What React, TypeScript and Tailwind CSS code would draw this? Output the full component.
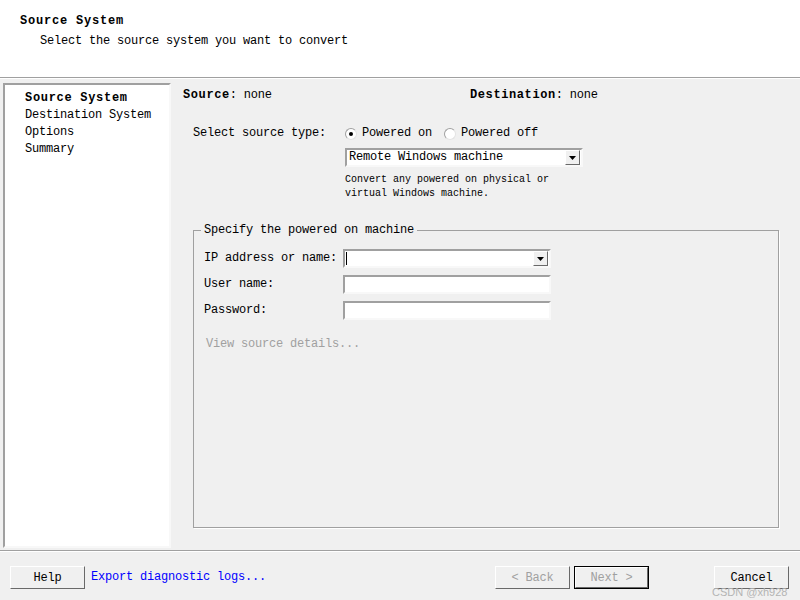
import React from "react"

const mono = { fontFamily: '"Liberation Mono", "DejaVu Sans Mono", monospace' }

function Radio({ checked }: { checked?: boolean }) {
	return (
		<span className="w-[12px] h-[12px] rounded-full bg-white border border-t-[#a0a0a0] border-l-[#a0a0a0] border-r-[#e3e3e3] border-b-[#e3e3e3] flex items-center justify-center shrink-0">
			{checked && <span className="w-[4px] h-[4px] rounded-full bg-black" />}
		</span>
	)
}

function ArrowBtn() {
	return (
		<span className="w-[15px] h-[15px] bg-[#f0f0f0] border border-t-white border-l-white border-r-[#696969] border-b-[#696969] flex items-center justify-center shrink-0">
			<svg width="7" height="4" viewBox="0 0 7 4">
				<path d="M0 0h7L3.5 4z" fill="#000" />
			</svg>
		</span>
	)
}

function Button({ label, disabled, isDefault }: { label: string; disabled?: boolean; isDefault?: boolean }) {
	return (
		<div className={`w-[75px] h-[23px] ${isDefault ? "border border-black" : ""}`}>
			<div className="w-full h-full bg-[#f0f0f0] border border-t-white border-l-white border-r-[#696969] border-b-[#696969] flex items-center justify-center">
				<span className={`text-[12px] tracking-[-0.2px] ${disabled ? "text-[#a0a0a0]" : "text-black"}`}>{label}</span>
			</div>
		</div>
	)
}

function TextBox({ combo, caret }: { combo?: boolean; caret?: boolean }) {
	return (
		<div className="w-[208px] h-[19px] bg-white border-2 border-t-[#a0a0a0] border-l-[#a0a0a0] border-r-[#f8f8f8] border-b-[#f8f8f8] flex items-center justify-between pl-[1px] pr-[1px]">
			{caret ? <span className="w-[1px] h-[13px] bg-black" /> : <span />}
			{combo && <ArrowBtn />}
		</div>
	)
}

export default function App() {
	return (
		<div className="w-[800px] h-[600px] bg-[#f0f0f0] flex flex-col text-black overflow-hidden" style={mono}>
			{/* Header */}
			<div className="h-[77px] bg-white pt-[13px] pl-[20px] shrink-0">
				<div className="text-[12px] font-bold tracking-[0.8px] leading-[17px]">Source System</div>
				<div className="text-[12px] tracking-[-0.2px] leading-[17px] mt-[3px] pl-[20px]">Select the source system you want to convert</div>
			</div>
			<div className="h-[2px] border-t border-[#a0a0a0] bg-white shrink-0" />

			{/* Main */}
			<div className="flex flex-1 min-h-0">
				<div className="w-[168px] ml-[3px] mt-[4px] mb-[2px] bg-white border-2 border-t-[#a0a0a0] border-l-[#a0a0a0] border-r-[#f8f8f8] border-b-[#f8f8f8] pt-[5px] pl-[20px] text-[12px] tracking-[-0.2px] leading-[17px]">
					<div className="font-bold tracking-[0.7px]">Source System</div>
					<div>Destination System</div>
					<div>Options</div>
					<div>Summary</div>
				</div>

				<div className="flex-1 flex flex-col pt-[8px] pl-[12px] pr-[21px] pb-[22px] text-[12px] tracking-[-0.2px] leading-[17px]">
					<div className="flex">
						<div className="w-[287px]">
							<span className="font-bold tracking-[0.6px]">Source</span>: none
						</div>
						<div>
							<span className="font-bold tracking-[0.6px]">Destination</span>: none
						</div>
					</div>

					<div className="flex mt-[21px] pl-[10px]">
						<div className="w-[152px]">Select source type:</div>
						<div className="flex flex-col">
							<div className="flex items-center">
								<Radio checked />
								<span className="ml-[5px] mr-[12px]">Powered on</span>
								<Radio />
								<span className="ml-[5px]">Powered off</span>
							</div>
							<div className="mt-[6px] w-[238px] h-[19px] bg-white border-2 border-t-[#a0a0a0] border-l-[#a0a0a0] border-r-[#f8f8f8] border-b-[#f8f8f8] flex items-center justify-between pl-[2px] pr-[1px]">
								<span>Remote Windows machine</span>
								<ArrowBtn />
							</div>
							<div className="mt-[6px] text-[10px] tracking-[0px] leading-[14px]">
								<div>Convert any powered on physical or</div>
								<div>virtual Windows machine.</div>
							</div>
						</div>
					</div>

					<fieldset className="flex-1 mt-[21px] ml-[10px] border border-[#a0a0a0] shadow-[1px_1px_0_#ffffff] pl-[10px] pr-[10px]">
						<legend className="px-[3px] -ml-[3px] leading-[17px]">Specify the powered on machine</legend>
						<div className="flex flex-col gap-[7px] mt-[10px]">
							<div className="flex items-center">
								<div className="w-[139px]">IP address or name:</div>
								<TextBox combo caret />
							</div>
							<div className="flex items-center">
								<div className="w-[139px]">User name:</div>
								<TextBox />
							</div>
							<div className="flex items-center">
								<div className="w-[139px]">Password:</div>
								<TextBox />
							</div>
						</div>
						<div className="mt-[16px] ml-[2px] text-[#a0a0a0]">View source details...</div>
					</fieldset>
				</div>
			</div>

			{/* Footer */}
			<div className="h-[2px] border-t border-[#a0a0a0] bg-white shrink-0" />
			<div className="h-[48px] shrink-0 flex items-start pt-[14px] pl-[10px] pr-[11px]">
				<Button label="Help" />
				<span className="ml-[6px] mt-[3px] text-[12px] tracking-[-0.2px] leading-[17px] text-[#0000ff]">Export diagnostic logs...</span>
				<div className="flex-1" />
				<Button label="< Back" disabled />
				<div className="ml-[4px]">
					<Button label="Next >" disabled isDefault />
				</div>
				<div className="ml-[65px] relative">
					<Button label="Cancel" />
					<span className="absolute left-[-2px] top-[20px] text-[11px] leading-[12px] tracking-[0px] text-[#b4b4b4] whitespace-nowrap" style={{ fontFamily: '"Liberation Sans", sans-serif' }}>
						CSDN @xh928
					</span>
				</div>
			</div>
		</div>
	)
}
